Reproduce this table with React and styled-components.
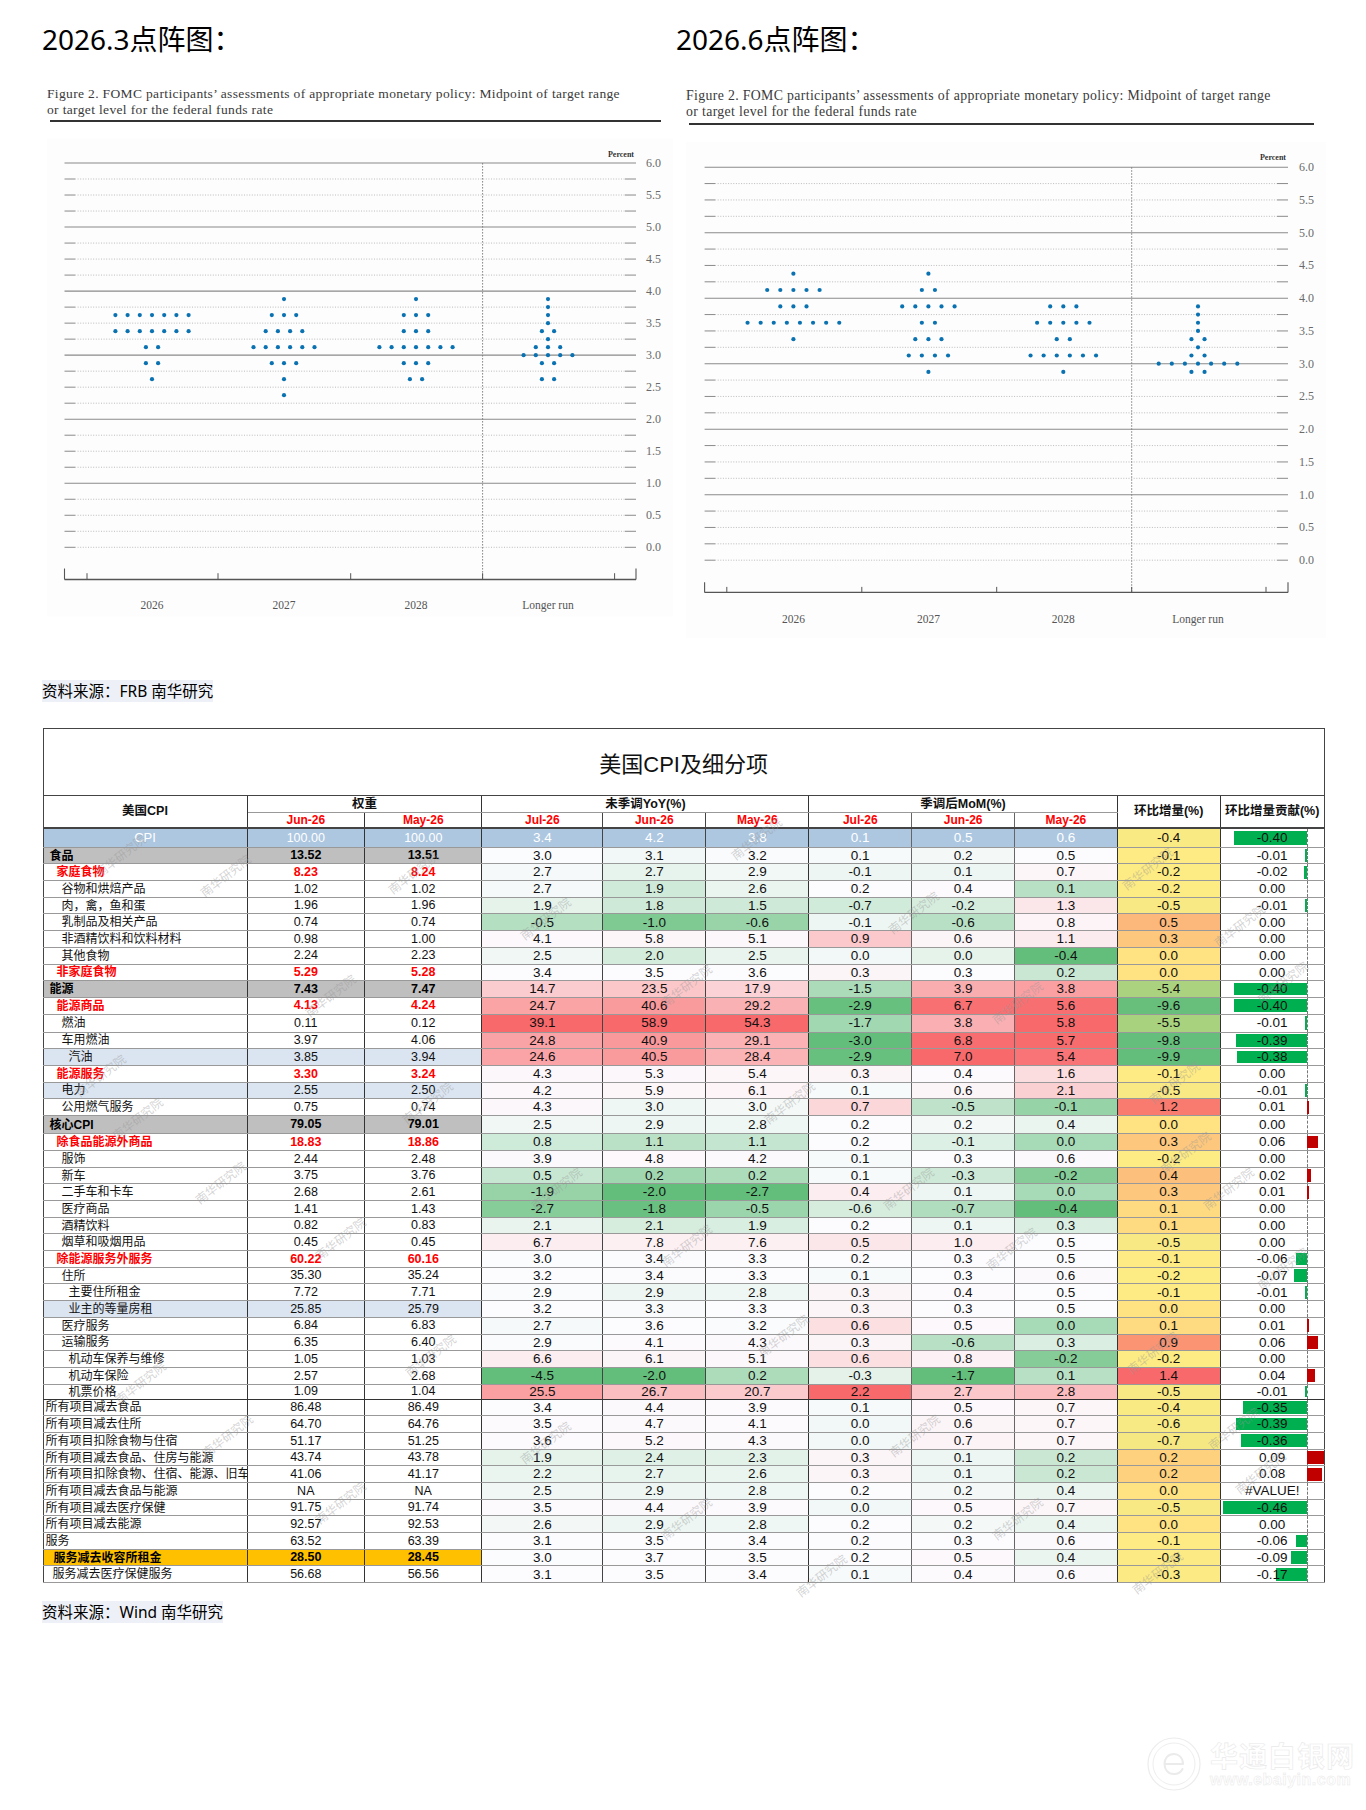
import React from 'react';
import styled, { createGlobalStyle } from 'styled-components';

const GlobalStyle = createGlobalStyle`
  html, body { margin: 0; padding: 0; background: #fff; }
  body { font-family: "Noto Sans", "Noto Sans CJK SC", sans-serif; color: #000; }
  * { box-sizing: border-box; }
`;

const Page = styled.div`
  position: relative;
  width: 1366px;
  height: 1810px;
  overflow: hidden;
  background: #fff;
`;

const ChartsRow = styled.div`
  display: flex;
  align-items: flex-start;
  height: 645px;
`;

const ChartPanel = styled.section`
  display: flex;
  flex-direction: column;
  flex: none;
  width: ${(p) => p.$w}px;
  margin-left: ${(p) => p.$ml}px;
  padding-top: 22px;
`;

const PanelTitle = styled.h2`
  margin: 0;
  font-family: "Noto Sans", "Noto Sans CJK SC", sans-serif;
  font-size: 28px;
  line-height: 35px;
  font-weight: 400;
  color: #000;
  white-space: nowrap;
`;

const Caption = styled.p`
  margin: ${(p) => p.$mt}px 0 0 ${(p) => p.$pl}px;
  font-family: "Liberation Serif", "DejaVu Serif", serif;
  font-size: ${(p) => p.$fs}px;
  letter-spacing: 0.35px;
  line-height: ${(p) => p.$lh}px;
  color: #3a3a3a;
  white-space: nowrap;
`;

const Rule = styled.div`
  margin: ${(p) => p.$mt}px 0 0 ${(p) => p.$ml}px;
  width: ${(p) => p.$w}px;
  height: 2px;
  background: #333;
`;

const ChartSvg = styled.svg`
  display: block;
  flex: none;
  font-family: "Liberation Serif", "DejaVu Serif", serif;
`;

const SourceNote = styled.p`
  margin: ${(p) => p.$mt}px 0 0 42px;
  font-family: "Noto Sans", "Noto Sans CJK SC", sans-serif;
  font-size: 15.5px;
  line-height: 20px;
  color: #000;
  white-space: nowrap;
`;

const Highlight = styled.span`
  background: #eef0f7;
`;

/* ---------- Table ---------- */

const TableWrap = styled.div`
  position: relative;
  margin: 27px 0 0 42.5px;
  width: 1281.3px;
`;

const Table = styled.table`
  border-collapse: collapse;
  table-layout: fixed;
  width: 1281.3px;
  border: 1.5px solid #444;
  font-family: "Liberation Sans", "Noto Sans CJK SC", sans-serif;
`;

const Col = styled.col`
  width: ${(p) => p.$w}px;
`;

const Tr = styled.tr`
  height: ${(p) => p.$h}px;
`;

const TitleTh = styled.th`
  height: 67px;
  padding: 0;
  border-bottom: 1.5px solid #444;
  font-family: "Liberation Sans", "Noto Sans CJK SC", sans-serif;
  font-size: 22px;
  font-weight: 400;
  color: #111;
  text-align: center;
  vertical-align: middle;
`;

const HeadTh = styled.th`
  padding: 0;
  border-right: ${(p) => p.$br || 'none'};
  border-bottom: ${(p) => p.$bb || 'none'};
  font-size: ${(p) => (p.$date ? 12 : 12.5)}px;
  font-weight: 700;
  color: ${(p) => (p.$date ? '#ff0000' : '#111')};
  text-align: center;
  vertical-align: middle;
  line-height: 1;
  white-space: nowrap;
  overflow: hidden;
`;

const Td = styled.td`
  padding: 0;
  border-right: ${(p) => p.$br || 'none'};
  border-bottom: ${(p) => p.$bb};
  background: ${(p) => p.$bg || 'transparent'};
  color: ${(p) => p.$fg || '#111'};
  font-weight: ${(p) => (p.$bold ? 700 : 400)};
  vertical-align: middle;
  line-height: 1;
  white-space: nowrap;
  overflow: hidden;
`;

const LabelTd = styled(Td)`
  text-align: ${(p) => (p.$center ? 'center' : 'left')};
  padding-left: ${(p) => p.$indent}px;
  font-size: ${(p) => (p.$center ? 13 : 12)}px;
  text-overflow: clip;
`;

const WeightTd = styled(Td)`
  text-align: center;
  font-size: 12.5px;
`;

const HeatTd = styled(Td)`
  text-align: center;
  font-family: "Liberation Sans Narrow", "Arial Narrow", "Liberation Sans", sans-serif;
  font-size: 13.5px;
`;

const BarTd = styled(HeatTd)`
  position: relative;
`;

const BarAxis = styled.span`
  position: absolute;
  top: 0;
  bottom: 0;
  left: 86.7px;
  border-left: 1px dashed #777;
`;

const BarFill = styled.span`
  position: absolute;
  top: 1.5px;
  bottom: 1.5px;
  background: ${(p) => (p.$neg ? '#00b050' : '#c00000')};
`;

const BarText = styled.span`
  position: relative;
  z-index: 1;
`;

const Watermark = styled.span`
  position: absolute;
  transform: translate(-50%, -50%) rotate(-38deg);
  font-family: "Noto Sans CJK SC", sans-serif;
  font-size: 12px;
  color: rgba(150, 150, 150, 0.42);
  white-space: nowrap;
  pointer-events: none;
  z-index: 2;
`;

/* ---------- Site mark ---------- */

const SiteMark = styled.div`
  position: absolute;
  left: 1146px;
  top: 1736px;
  display: flex;
  align-items: center;
  gap: 8px;
  pointer-events: none;
`;

const SiteText = styled.div`
  display: flex;
  flex-direction: column;
  align-items: flex-start;
`;

const SiteName = styled.span`
  font-family: "Noto Sans CJK SC", sans-serif;
  font-size: 28px;
  line-height: 32px;
  font-weight: 700;
  letter-spacing: 1px;
  color: #fff;
  -webkit-text-stroke: 0.6px #e9e9e9;
`;

const SiteUrl = styled.span`
  font-family: "Liberation Sans", sans-serif;
  font-size: 16px;
  line-height: 18px;
  font-weight: 700;
  letter-spacing: 0.5px;
  color: #fff;
  -webkit-text-stroke: 0.5px #e9e9e9;
`;

/* ---------- Chart data ---------- */

const LEFT_CHART = {
  x0: 42, top: 121.5, w: 634, h: 503.5,
  left: 64.5, right: 636, y6: 162.5, unit: 64.05, vline: 482.6,
  axisY: 579, endTop: 568, tickTop: 572.7, ticks: [87, 218, 350.7, 482.6, 614.6],
  labelX: 646, yearY: 604.4, spacing: 12.2, percentX: 634, percentY: 156,
  bg: { x: 47, y: 138, w: 626, h: 478 },
  years: [[152, '2026'], [284, '2027'], [416, '2028'], [548, 'Longer run']],
  dots: [
    [[3.625, 7], [3.375, 7], [3.125, 2], [2.875, 2], [2.625, 1]],
    [[3.875, 1], [3.625, 3], [3.375, 4], [3.125, 6], [2.875, 3], [2.625, 1], [2.375, 1]],
    [[3.875, 1], [3.625, 3], [3.375, 3], [3.125, 7], [2.875, 3], [2.625, 2]],
    [[3.875, 1], [3.75, 1], [3.625, 1], [3.5, 1], [3.375, 2], [3.25, 1], [3.125, 3], [3.0, 5], [2.875, 2], [2.625, 2]],
  ],
};

const RIGHT_CHART = {
  x0: 676, top: 125, w: 690, h: 520,
  left: 704.6, right: 1288, y6: 167.2, unit: 65.5, vline: 1131.7,
  axisY: 592.4, endTop: 582.3, tickTop: 586.9, ticks: [726.8, 861.8, 996.7, 1131.7, 1266],
  labelX: 1299, yearY: 619, spacing: 13.1, percentX: 1286, percentY: 160.3,
  bg: { x: 686, y: 142, w: 640, h: 496 },
  years: [[793.4, '2026'], [928.4, '2027'], [1063.3, '2028'], [1198, 'Longer run']],
  dots: [
    [[4.375, 1], [4.125, 5], [3.875, 3], [3.625, 8], [3.375, 1]],
    [[4.375, 1], [4.125, 2], [3.875, 5], [3.625, 2], [3.375, 3], [3.125, 4], [2.875, 1]],
    [[3.875, 3], [3.625, 5], [3.375, 2], [3.125, 6], [2.875, 1]],
    [[3.875, 1], [3.75, 1], [3.625, 1], [3.5, 1], [3.375, 2], [3.25, 1], [3.125, 2], [3.0, 7], [2.875, 2]],
  ],
};

function DotChart({ cfg }) {
  const c = cfg;
  const yOf = (v) => c.y6 + (6 - v) * c.unit;
  const grid = [];
  for (let i = 0; i <= 24; i++) {
    const v = 6 - i * 0.25;
    const y = yOf(v);
    const major = Number.isInteger(v) && v > 0;
    if (major) {
      grid.push(<line key={`g${i}`} x1={c.left} x2={c.right} y1={y} y2={y} stroke="#8a8a8a" strokeWidth="1.1" />);
    } else {
      grid.push(
        <g key={`g${i}`}>
          <line x1={c.left + 10.5} x2={c.right - 11} y1={y} y2={y} stroke="#a0a0a0" strokeWidth="0.7" strokeDasharray="1 1.6" />
          <line x1={c.left} x2={c.left + 10.5} y1={y} y2={y} stroke="#8a8a8a" strokeWidth="1" />
          <line x1={c.right - 11} x2={c.right} y1={y} y2={y} stroke="#8a8a8a" strokeWidth="1" />
        </g>
      );
    }
    if (i % 2 === 0) {
      grid.push(
        <text key={`l${i}`} x={c.labelX} y={y} dominantBaseline="central" fontSize="12" fill="#6a6a6a">
          {v.toFixed(1)}
        </text>
      );
    }
  }
  const dots = [];
  c.dots.forEach((col, ci) => {
    const cx = c.years[ci][0];
    col.forEach(([v, n]) => {
      for (let k = 0; k < n; k++) {
        dots.push(<circle key={`${ci}-${v}-${k}`} cx={cx + (k - (n - 1) / 2) * c.spacing} cy={yOf(v)} r="2.1" fill="#0b72b2" />);
      }
    });
  });
  return (
    <ChartSvg width={c.w} height={c.h} viewBox={`${c.x0} ${c.top} ${c.w} ${c.h}`}>
      <rect x={c.bg.x} y={c.bg.y} width={c.bg.w} height={c.bg.h} fill="#fdfdfd" />
      {grid}
      <text x={c.percentX} y={c.percentY} textAnchor="end" fontSize="8" fontWeight="700" fill="#333">Percent</text>
      <line x1={c.vline} x2={c.vline} y1={c.y6} y2={c.axisY} stroke="#7a7a7a" strokeWidth="0.9" strokeDasharray="1.6 1.4" />
      <line x1={c.left} x2={c.right} y1={c.axisY} y2={c.axisY} stroke="#555" strokeWidth="1.4" />
      <line x1={c.left} x2={c.left} y1={c.endTop} y2={c.axisY} stroke="#555" strokeWidth="1.1" />
      <line x1={c.right} x2={c.right} y1={c.endTop} y2={c.axisY} stroke="#555" strokeWidth="1.1" />
      {c.ticks.map((x) => (
        <line key={x} x1={x} x2={x} y1={c.tickTop} y2={c.axisY} stroke="#555" strokeWidth="1" />
      ))}
      {c.years.map(([x, t]) => (
        <text key={t} x={x} y={c.yearY} textAnchor="middle" dominantBaseline="central" fontSize="11.5" fill="#555">{t}</text>
      ))}
      {dots}
    </ChartSvg>
  );
}

/* ---------- Table data ---------- */

const W = [204, 117.6, 117.4, 120.8, 103, 103, 102.9, 103, 102.5, 102.9, 104.2];
const RB = [
  '1.5px solid #333', '1px solid #333', '1.5px solid #333',
  '1px solid #444', '1px solid #444', '1.5px solid #333',
  '1px solid #666', '1px solid #666', '1.5px solid #333',
  '1.5px solid #333', 'none',
];

const STYLES = {
  cpi: { bg: '#adc7e0', fg: '#fff', bold: false, indent: 0, center: true },
  major: { bg: '#bfbfbf', fg: '#000', bold: true, indent: 6 },
  red: { fg: '#ff0000', bold: true, indent: 13 },
  l2: { indent: 18 },
  l2blue: { indent: 18, bg: '#dbe5f1' },
  l3: { indent: 25 },
  l3blue: { indent: 25, bg: '#dbe5f1' },
  sum: { indent: 2 },
  orange: { bg: '#ffc000', fg: '#000', bold: true, indent: 10 },
  sub: { indent: 9 },
};

const ROWS = [
  ['CPI', 'cpi', 19, '100.00', '100.00', 3.4, 4.2, 3.8, 0.1, 0.5, 0.6, -0.4, '-0.40'],
  ['食品', 'major', 16.69, '13.52', '13.51', 3.0, 3.1, 3.2, 0.1, 0.2, 0.5, -0.1, '-0.01'],
  ['家庭食物', 'red', 16.69, '8.23', '8.24', 2.7, 2.7, 2.9, -0.1, 0.1, 0.7, -0.2, '-0.02'],
  ['谷物和烘焙产品', 'l2', 16.69, '1.02', '1.02', 2.7, 1.9, 2.6, 0.2, 0.4, 0.1, -0.2, '0.00'],
  ['肉，禽，鱼和蛋', 'l2', 16.69, '1.96', '1.96', 1.9, 1.8, 1.5, -0.7, -0.2, 1.3, -0.5, '-0.01'],
  ['乳制品及相关产品', 'l2', 16.69, '0.74', '0.74', -0.5, -1.0, -0.6, -0.1, -0.6, 0.8, 0.5, '0.00'],
  ['非酒精饮料和饮料材料', 'l2', 16.69, '0.98', '1.00', 4.1, 5.8, 5.1, 0.9, 0.6, 1.1, 0.3, '0.00'],
  ['其他食物', 'l2', 16.69, '2.24', '2.23', 2.5, 2.0, 2.5, 0.0, 0.0, -0.4, 0.0, '0.00'],
  ['非家庭食物', 'red', 16.69, '5.29', '5.28', 3.4, 3.5, 3.6, 0.3, 0.3, 0.2, 0.0, '0.00'],
  ['能源', 'major', 16.69, '7.43', '7.47', 14.7, 23.5, 17.9, -1.5, 3.9, 3.8, -5.4, '-0.40'],
  ['能源商品', 'red', 16.69, '4.13', '4.24', 24.7, 40.6, 29.2, -2.9, 6.7, 5.6, -9.6, '-0.40'],
  ['燃油', 'l2', 18, '0.11', '0.12', 39.1, 58.9, 54.3, -1.7, 3.8, 5.8, -5.5, '-0.01'],
  ['车用燃油', 'l2', 16.69, '3.97', '4.06', 24.8, 40.9, 29.1, -3.0, 6.8, 5.7, -9.8, '-0.39'],
  ['汽油', 'l3blue', 16.69, '3.85', '3.94', 24.6, 40.5, 28.4, -2.9, 7.0, 5.4, -9.9, '-0.38'],
  ['能源服务', 'red', 16.69, '3.30', '3.24', 4.3, 5.3, 5.4, 0.3, 0.4, 1.6, -0.1, '0.00'],
  ['电力', 'l2blue', 16.69, '2.55', '2.50', 4.2, 5.9, 6.1, 0.1, 0.6, 2.1, -0.5, '-0.01'],
  ['公用燃气服务', 'l2', 16.69, '0.75', '0.74', 4.3, 3.0, 3.0, 0.7, -0.5, -0.1, 1.2, '0.01'],
  ['核心CPI', 'major', 18.3, '79.05', '79.01', 2.5, 2.9, 2.8, 0.2, 0.2, 0.4, 0.0, '0.00'],
  ['除食品能源外商品', 'red', 16.69, '18.83', '18.86', 0.8, 1.1, 1.1, 0.2, -0.1, 0.0, 0.3, '0.06'],
  ['服饰', 'l2', 16.69, '2.44', '2.48', 3.9, 4.8, 4.2, 0.1, 0.3, 0.6, -0.2, '0.00'],
  ['新车', 'l2', 16.69, '3.75', '3.76', 0.5, 0.2, 0.2, 0.1, -0.3, -0.2, 0.4, '0.02'],
  ['二手车和卡车', 'l2', 16.69, '2.68', '2.61', -1.9, -2.0, -2.7, 0.4, 0.1, 0.0, 0.3, '0.01'],
  ['医疗商品', 'l2', 16.69, '1.41', '1.43', -2.7, -1.8, -0.5, -0.6, -0.7, -0.4, 0.1, '0.00'],
  ['酒精饮料', 'l2', 16.69, '0.82', '0.83', 2.1, 2.1, 1.9, 0.2, 0.1, 0.3, 0.1, '0.00'],
  ['烟草和吸烟用品', 'l2', 16.69, '0.45', '0.45', 6.7, 7.8, 7.6, 0.5, 1.0, 0.5, -0.5, '0.00'],
  ['除能源服务外服务', 'red', 16.69, '60.22', '60.16', 3.0, 3.4, 3.3, 0.2, 0.3, 0.5, -0.1, '-0.06'],
  ['住所', 'l2', 16.69, '35.30', '35.24', 3.2, 3.4, 3.3, 0.1, 0.3, 0.6, -0.2, '-0.07'],
  ['主要住所租金', 'l3', 16.69, '7.72', '7.71', 2.9, 2.9, 2.8, 0.3, 0.4, 0.5, -0.1, '-0.01'],
  ['业主的等量房租', 'l3blue', 16.69, '25.85', '25.79', 3.2, 3.3, 3.3, 0.3, 0.3, 0.5, 0.0, '0.00'],
  ['医疗服务', 'l2', 16.69, '6.84', '6.83', 2.7, 3.6, 3.2, 0.6, 0.5, 0.0, 0.1, '0.01'],
  ['运输服务', 'l2', 16.69, '6.35', '6.40', 2.9, 4.1, 4.3, 0.3, -0.6, 0.3, 0.9, '0.06'],
  ['机动车保养与维修', 'l3', 16.69, '1.05', '1.03', 6.6, 6.1, 5.1, 0.6, 0.8, -0.2, -0.2, '0.00'],
  ['机动车保险', 'l3', 16.69, '2.57', '2.68', -4.5, -2.0, 0.2, -0.3, -1.7, 0.1, 1.4, '0.04'],
  ['机票价格', 'l3', 15, '1.09', '1.04', 25.5, 26.7, 20.7, 2.2, 2.7, 2.8, -0.5, '-0.01'],
  ['所有项目减去食品', 'sum', 16.69, '86.48', '86.49', 3.4, 4.4, 3.9, 0.1, 0.5, 0.7, -0.4, '-0.35'],
  ['所有项目减去住所', 'sum', 16.69, '64.70', '64.76', 3.5, 4.7, 4.1, 0.0, 0.6, 0.7, -0.6, '-0.39'],
  ['所有项目扣除食物与住宿', 'sum', 16.69, '51.17', '51.25', 3.6, 5.2, 4.3, 0.0, 0.7, 0.7, -0.7, '-0.36'],
  ['所有项目减去食品、住房与能源', 'sum', 16.69, '43.74', '43.78', 1.9, 2.4, 2.3, 0.3, 0.1, 0.2, 0.2, '0.09'],
  ['所有项目扣除食物、住宿、能源、旧车和新车', 'sum', 16.69, '41.06', '41.17', 2.2, 2.7, 2.6, 0.3, 0.1, 0.2, 0.2, '0.08'],
  ['所有项目减去食品与能源', 'sum', 16.69, 'NA', 'NA', 2.5, 2.9, 2.8, 0.2, 0.2, 0.4, 0.0, '#VALUE!'],
  ['所有项目减去医疗保健', 'sum', 16.69, '91.75', '91.74', 3.5, 4.4, 3.9, 0.0, 0.5, 0.7, -0.5, '-0.46'],
  ['所有项目减去能源', 'sum', 16.69, '92.57', '92.53', 2.6, 2.9, 2.8, 0.2, 0.2, 0.4, 0.0, '0.00'],
  ['服务', 'sum', 16.69, '63.52', '63.39', 3.1, 3.5, 3.4, 0.2, 0.3, 0.6, -0.1, '-0.06'],
  ['服务减去收容所租金', 'orange', 16.69, '28.50', '28.45', 3.0, 3.7, 3.5, 0.2, 0.5, 0.4, -0.3, '-0.09'],
  ['服务减去医疗保健服务', 'sub', 16.69, '56.68', '56.56', 3.1, 3.5, 3.4, 0.1, 0.4, 0.6, -0.3, '-0.17'],
];

/* ---------- Conditional formatting (Excel colour scales) ---------- */

const GREEN = [99, 190, 123];
const WHITE = [252, 252, 255];
const YELLOW = [255, 235, 132];
const RED = [248, 105, 107];

const mix = (a, b, t) => {
  const k = Math.max(0, Math.min(1, t));
  return `rgb(${a.map((v, i) => Math.round(v + (b[i] - v) * k)).join(',')})`;
};

function colourScale(values, midColour) {
  const s = [...values].sort((a, b) => a - b);
  const mn = s[0];
  const mx = s[s.length - 1];
  const r = 0.5 * (s.length - 1);
  const lo = Math.floor(r);
  const md = s[lo] + (s[Math.ceil(r)] - s[lo]) * (r - lo);
  return (v) => {
    if (v <= md) return mix(GREEN, midColour, md === mn ? 1 : (v - mn) / (md - mn));
    return mix(midColour, RED, mx === md ? 0 : (v - md) / (mx - md));
  };
}

const HEAT_COLS = [5, 6, 7, 8, 9, 10];
const heatScales = HEAT_COLS.map((ci) => colourScale(ROWS.slice(1).map((r) => r[ci]), WHITE));
const incScale = colourScale(ROWS.map((r) => r[11]), YELLOW);

const BAR_AXIS = 86.7;
const BAR_SCALE = 184;

const WATERMARKS = [
  [120, 855], [225, 875], [413, 872], [756, 838], [545, 918], [913, 912], [1147, 868], [1239, 925],
  [330, 995], [100, 1075], [137, 1118], [427, 1102], [220, 1182], [1017, 1002], [1282, 982],
  [686, 985], [789, 1102], [556, 1188], [1174, 1082], [1185, 1152], [908, 1188], [1228, 1188],
  [340, 1238], [430, 1355], [140, 1382], [686, 1245], [1011, 1248], [783, 1335], [1152, 1352],
  [1282, 1268], [227, 1435], [340, 1502], [545, 1442], [914, 1435], [1233, 1428], [686, 1518],
  [1017, 1518], [1260, 1472], [1157, 1572], [821, 1575],
];

function ContribCell({ text, bb }) {
  const v = parseFloat(text);
  const has = !Number.isNaN(v) && v !== 0;
  const len = has ? Math.abs(v) * BAR_SCALE : 0;
  return (
    <BarTd $bb={bb}>
      <BarAxis />
      {has && (
        <BarFill $neg={v < 0} style={{ left: v < 0 ? BAR_AXIS - len : BAR_AXIS, width: len }} />
      )}
      <BarText>{text}</BarText>
    </BarTd>
  );
}

function DataRow({ row }) {
  const [label, kind, h, w1, w2, ...rest] = row;
  const st = STYLES[kind];
  const isCpi = kind === 'cpi';
  const bb = label === '机票价格' ? '1.5px solid #333' : '1px solid #999';
  const heat = rest.slice(0, 6);
  const inc = rest[6];
  const contrib = rest[7];
  return (
    <Tr $h={h}>
      <LabelTd $br={RB[0]} $bb={bb} $bg={st.bg} $fg={st.fg} $bold={st.bold} $indent={st.indent} $center={st.center}>
        {label}
      </LabelTd>
      <WeightTd $br={RB[1]} $bb={bb} $bg={st.bg} $fg={st.fg} $bold={st.bold}>{w1}</WeightTd>
      <WeightTd $br={RB[2]} $bb={bb} $bg={st.bg} $fg={st.fg} $bold={st.bold}>{w2}</WeightTd>
      {heat.map((v, i) => (
        <HeatTd
          key={i}
          $br={RB[3 + i]}
          $bb={bb}
          $bg={isCpi ? st.bg : heatScales[i](v)}
          $fg={isCpi ? '#fff' : '#111'}
        >
          {v.toFixed(1)}
        </HeatTd>
      ))}
      <HeatTd $br={RB[9]} $bb={bb} $bg={incScale(inc)}>{inc.toFixed(1)}</HeatTd>
      <ContribCell text={contrib} bb={bb} />
    </Tr>
  );
}

function CpiTable() {
  const dates = ['Jun-26', 'May-26', 'Jul-26', 'Jun-26', 'May-26', 'Jul-26', 'Jun-26', 'May-26'];
  return (
    <TableWrap>
      <Table>
        <colgroup>
          {W.map((w, i) => <Col key={i} $w={w} />)}
        </colgroup>
        <thead>
          <tr>
            <TitleTh colSpan={11}>美国CPI及细分项</TitleTh>
          </tr>
          <Tr $h={16.7}>
            <HeadTh rowSpan={2} $br={RB[0]} $bb="2px solid #444">美国CPI</HeadTh>
            <HeadTh colSpan={2} $br={RB[2]} $bb="1px solid #999">权重</HeadTh>
            <HeadTh colSpan={3} $br={RB[5]} $bb="1px solid #999">未季调YoY(%)</HeadTh>
            <HeadTh colSpan={3} $br={RB[8]} $bb="1px solid #999">季调后MoM(%)</HeadTh>
            <HeadTh rowSpan={2} $br={RB[9]} $bb="2px solid #444">环比增量(%)</HeadTh>
            <HeadTh rowSpan={2} $bb="2px solid #444">环比增量贡献(%)</HeadTh>
          </Tr>
          <Tr $h={16}>
            {dates.map((d, i) => (
              <HeadTh key={i} $date $br={RB[i + 1]} $bb="2px solid #444">{d}</HeadTh>
            ))}
          </Tr>
        </thead>
        <tbody>
          {ROWS.map((r) => <DataRow key={r[0]} row={r} />)}
        </tbody>
      </Table>
      {WATERMARKS.map(([x, y], i) => (
        <Watermark key={i} style={{ left: x - 42.5, top: y - 728 }}>南华研究院</Watermark>
      ))}
    </TableWrap>
  );
}

function SiteLogo() {
  return (
    <SiteMark>
      <svg width="56" height="56" viewBox="0 0 56 56">
        <circle cx="28" cy="28" r="26" fill="none" stroke="#ececec" strokeWidth="1.2" />
        <circle cx="28" cy="28" r="21" fill="none" stroke="#eeeeee" strokeWidth="1" />
        <path d="M19 28 H37 M37 28 C37 21 32 18 28 18 C22 18 18.5 22.5 18.5 28 C18.5 33.5 22 38 28 38 C32 38 35 36 36.5 33"
          fill="none" stroke="#ebebeb" strokeWidth="2" strokeLinecap="round" />
      </svg>
      <SiteText>
        <SiteName>华通白银网</SiteName>
        <SiteUrl>www.ebaiyin.com</SiteUrl>
      </SiteText>
    </SiteMark>
  );
}

export default function App() {
  return (
    <Page>
      <GlobalStyle />
      <ChartsRow>
        <ChartPanel $w={634} $ml={42}>
          <PanelTitle>2026.3点阵图：</PanelTitle>
          <Caption $mt={28.85} $pl={5} $lh={15.7} $fs={13.5}>
            Figure 2. FOMC participants’ assessments of appropriate monetary policy: Midpoint of target range
            <br />
            or target level for the federal funds rate
          </Caption>
          <Rule $mt={2.25} $ml={8} $w={611} />
          <DotChart cfg={LEFT_CHART} />
        </ChartPanel>
        <ChartPanel $w={690} $ml={0}>
          <PanelTitle>2026.6点阵图：</PanelTitle>
          <Caption $mt={31.35} $pl={10} $lh={16.1} $fs={13.8}>
            Figure 2. FOMC participants’ assessments of appropriate monetary policy: Midpoint of target range
            <br />
            or target level for the federal funds rate
          </Caption>
          <Rule $mt={2.45} $ml={13} $w={625} />
          <DotChart cfg={RIGHT_CHART} />
        </ChartPanel>
      </ChartsRow>
      <SourceNote $mt={36}>
        <Highlight>资料来源：FRB 南华研究</Highlight>
      </SourceNote>
      <CpiTable />
      <SourceNote $mt={19}>
        <Highlight>资料来源：Wind 南华研究</Highlight>
      </SourceNote>
      <SiteLogo />
    </Page>
  );
}
